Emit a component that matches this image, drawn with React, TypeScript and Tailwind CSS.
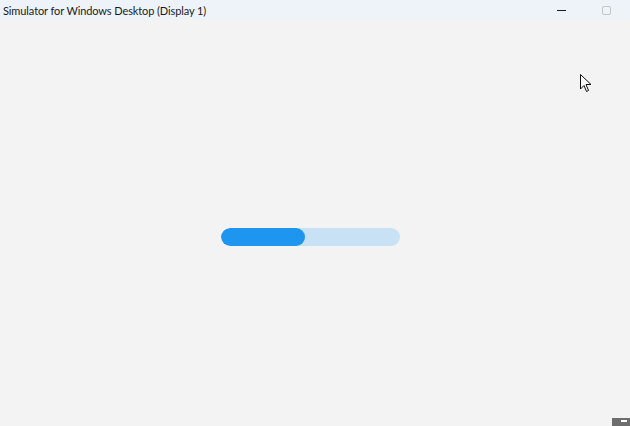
import React from 'react';

// -- TITLE BAR --
const TitleBar = () => (
  <div className="h-[20px] flex items-center justify-between bg-[#eef2f9] pl-[3px]">
    <span className="text-[11px] leading-none tracking-[-0.1px] text-[#1a1a1a] font-['Lato','Liberation_Sans',sans-serif]">
      Simulator for Windows Desktop (Display 1)
    </span>
    <div className="flex items-center h-full">
      <div className="w-[46px] h-full flex items-center justify-center">
        <div className="w-[9px] h-px bg-[#1a1a1a]" />
      </div>
      <div className="w-[46px] h-full flex items-center justify-center pr-[2px]">
        <div className="w-[9px] h-[9px] border border-[#c4c4c4] rounded-[2px]" />
      </div>
    </div>
  </div>
);

const Cursor = () => (
  <svg width="12" height="19" viewBox="0 0 12 19" className="absolute left-[580px] top-[74px]">
    <path d="M0.5 0.5 L0.5 15 L4 11.5 L6.5 17.5 L8.5 16.5 L6 10.5 L11 10.5 Z" fill="#ffffff" stroke="#111111" strokeWidth="1" strokeLinejoin="round" />
  </svg>
);

export default function App() {
  const progress = 84 / 179;
  return (
    <div className="w-[630px] h-[426px] relative overflow-hidden bg-[#f3f3f3] flex flex-col">
      <TitleBar />
      <div className="flex-1 pt-[208px] pl-[221px]">
        <div className="w-[179px] h-[18px] rounded-full bg-[#c8e1f5] overflow-hidden">
          <div className="h-full rounded-full bg-[#1e95ef]" style={{ width: `${progress * 100}%` }} />
        </div>
      </div>
      <Cursor />
      <div className="absolute left-[612px] top-[418px] w-[18px] h-[8px] bg-[#6d6d6d] flex justify-end pr-[3px] pt-[2px]">
        <div className="w-[6px] h-[2px] bg-white" />
      </div>
    </div>
  );
}
